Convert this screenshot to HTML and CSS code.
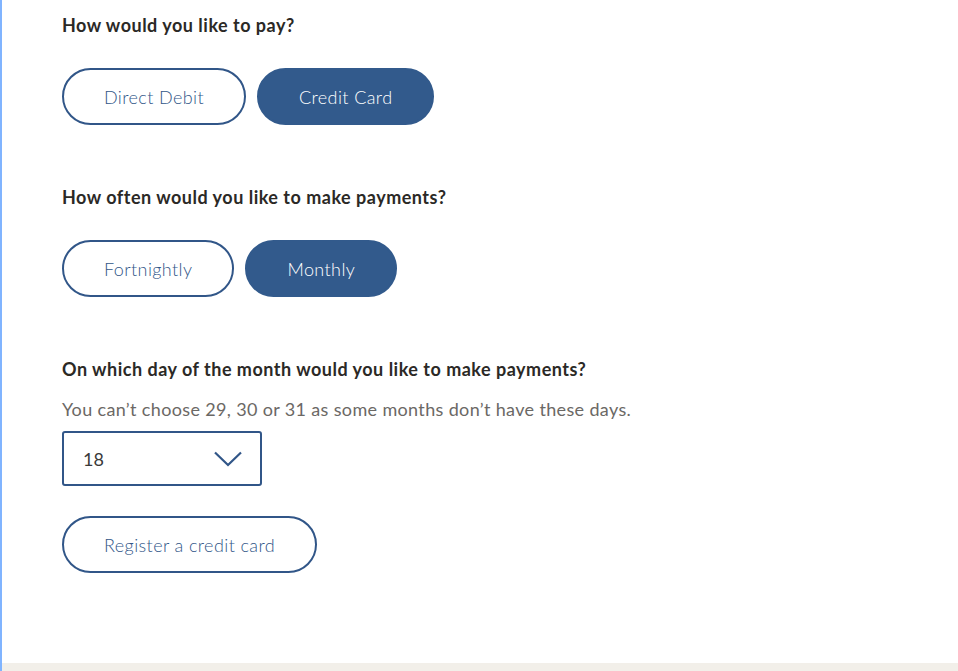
FILE: index.html
```html
<!DOCTYPE html>
<html>
<head>
    <title>Payment details</title>
    <meta name="viewport" content="width=device-width, initial-scale=1">
    <link rel="stylesheet" href="styles.css">
</head>
<body>
    <div class="page">
        <div class="form">
            <h3 class="question">How would you like to pay?</h3>
            <div class="choices">
                <button class="pill">Direct Debit</button>
                <button class="pill active">Credit Card</button>
            </div>

            <h3 class="question q-gap">How often would you like to make payments?</h3>
            <div class="choices">
                <button class="pill">Fortnightly</button>
                <button class="pill active">Monthly</button>
            </div>

            <h3 class="question q-gap">On which day of the month would you like to make payments?</h3>
            <p class="hint">You can’t choose 29, 30 or 31 as some months don’t have these days.</p>
            <div class="select">
                <span>18</span>
                <svg width="28" height="16" viewBox="0 0 28 16">
                    <polyline points="1,1.5 14,14 27,1.5" fill="none" stroke="#315688" stroke-width="2.2"></polyline>
                </svg>
            </div>

            <button class="pill register">Register a credit card</button>
        </div>
    </div>
    <div class="footer"></div>
</body>
</html>
```

FILE: styles.css
```css
*{
    box-sizing: border-box;
}
body{
    margin:0;
    background-color: #fff;
    font-family: Lato, "Open Sans", sans-serif;
    color:#2b2926;
}
.page{
    border-left: 2px solid #80b4ff;
    height: 663px;
}
.form{
    padding: 13px 0 0 60px;
}
.question{
    margin:0;
    font-size: 18px;
    line-height: 24px;
    font-weight: bold;
    letter-spacing: 0.5px;
    color:#2b2926;
}
.q-gap{
    margin-top: 60px;
}
.choices{
    display:flex;
    gap: 11px;
    margin-top: 31px;
}
.pill{
    height: 57px;
    padding: 0 40px;
    border: 2px solid #315688;
    border-radius: 29px;
    background: #fff;
    color: #315688;
    font-family: Lato, "Open Sans", sans-serif;
    font-size: 18px;
    font-weight: 300;
    letter-spacing: 0.4px;
    cursor: pointer;
}
.pill.active{
    background: #325a8c;
    border-color: #325a8c;
    color: #fff;
}
.hint{
    margin: 16px 0 0;
    font-size: 18px;
    line-height: 24px;
    letter-spacing: 0.35px;
    color: #6b6865;
    font-weight: 400;
}
.select{
    margin-top: 10px;
    width: 200px;
    height: 55px;
    border: 2px solid #315688;
    border-radius: 3px;
    display:flex;
    align-items: center;
    justify-content: space-between;
    padding: 0 18px 0 19px;
    font-size: 18px;
    color:#3a3a3a;
}
.register{
    margin-top: 30px;
}
.footer{
    height: 8px;
    background: #f2efe9;
    border-left: 2px solid #80b4ff;
}
```
